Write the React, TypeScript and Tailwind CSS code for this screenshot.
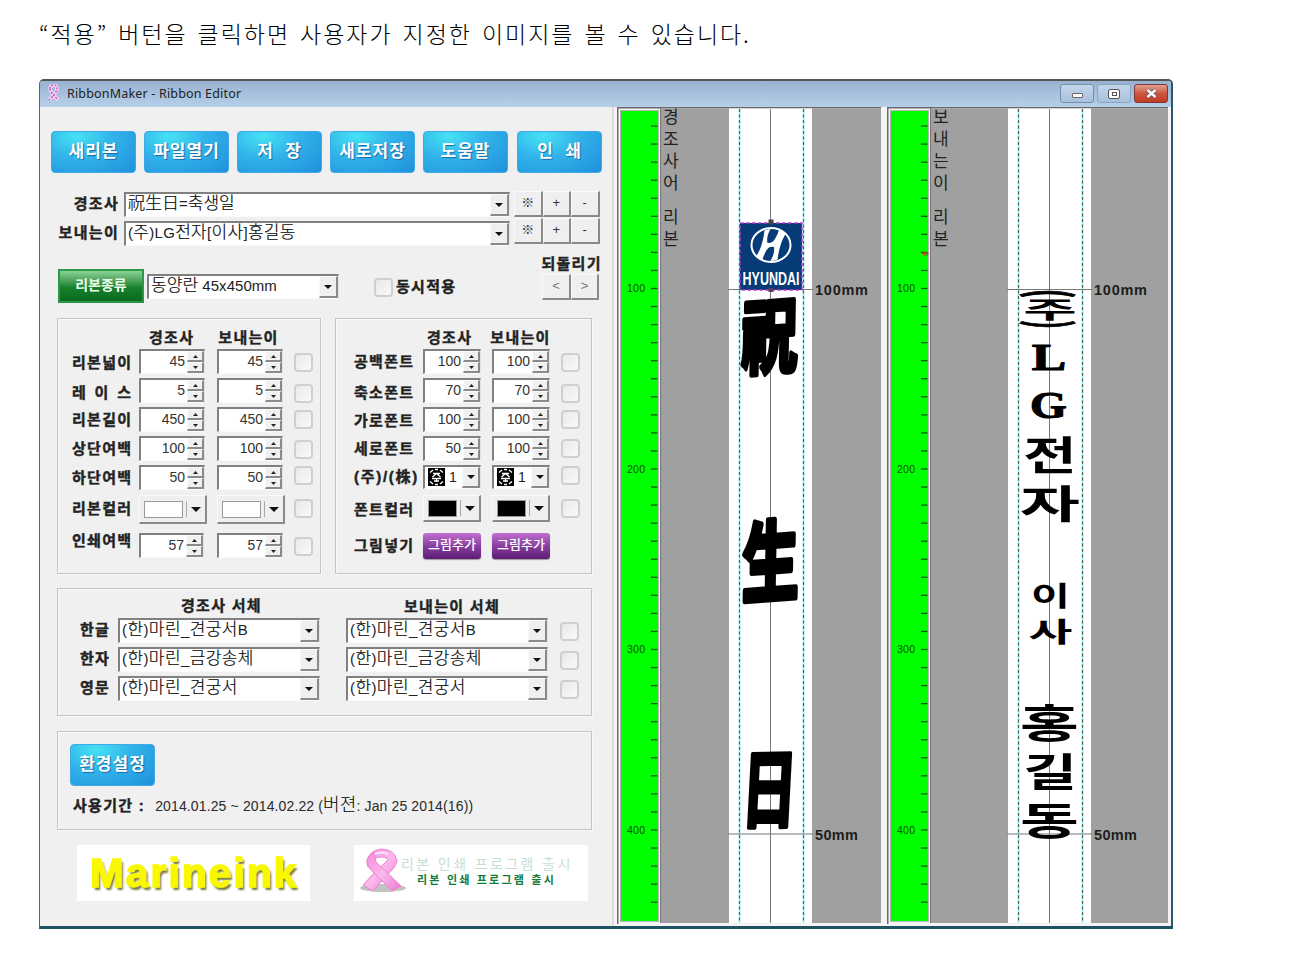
import React from "react";

const KR = "font-['Liberation_Sans','Noto_Sans_CJK_KR',sans-serif]";
const HAN = /([\u3131-\u318e\uac00-\ud7a3\u4e00-\u9fff]+)/;

/* Latin keeps the inherited size, Hangul and Hanja are set slightly larger. */
function Mixed({ text }: { text: string }) {
  return (
    <>
      {text.split(HAN).map((part, i) =>
        HAN.test(part) ? (
          <span key={i} className="text-[17px] leading-none font-light text-black [-webkit-text-stroke:0.2px_#222]">{part}</span>
        ) : (
          <span key={i}>{part}</span>
        ),
      )}
    </>
  );
}

function Label({ children, className = "" }: { children: React.ReactNode; className?: string }) {
  return (
    <div className={`h-5 shrink-0 whitespace-nowrap text-[15px] leading-5 font-bold tracking-[1.3px] text-[#222] [-webkit-text-stroke:0.4px_#222] ${className}`}>
      {children}
    </div>
  );
}

function BlueButton({ children, className = "" }: { children: React.ReactNode; className?: string }) {
  return (
    <button className={`h-[42px] w-[85px] shrink-0 rounded-[4px] border border-[#3fa9e6] bg-[radial-gradient(ellipse_at_30%_10%,#46e2f4_0%,#32b4ea_42%,#2090dc_100%)] pb-[2px] text-center text-[17px] leading-none font-bold tracking-[1px] whitespace-pre text-white [text-shadow:1px_1px_1px_#1769a8] ${className}`}>
      {children}
    </button>
  );
}

function Check({ className = "" }: { className?: string }) {
  return (
    <div className={`size-[19px] shrink-0 rounded-[4px] border-2 border-[#cfcfcf] bg-linear-to-br from-[#e9e9e9] to-[#f9f9f9] ${className}`} />
  );
}

function Down({ small = false }: { small?: boolean }) {
  return (
    <svg className={small ? "h-[4px] w-[8px]" : "h-[5px] w-[10px]"} viewBox="0 0 10 5">
      <path d="M0 0H10L5 5Z" fill="#111" />
    </svg>
  );
}

const SUNKEN = "border-t-2 border-l-2 border-r border-b border-t-[#808080] border-l-[#808080] border-r-[#e4e4e4] border-b-[#fafafa]";
const RAISED = "border-t border-l border-r-2 border-b-2 border-t-[#fafafa] border-l-[#fafafa] border-r-[#8a8a8a] border-b-[#8a8a8a]";

function Combo({ text, className = "", spacing = "tracking-[0.4px]" }: { text: string; className?: string; spacing?: string }) {
  return (
    <div className={`flex h-[25px] shrink-0 bg-white ${SUNKEN} ${className}`}>
      <div className={`min-w-0 flex-1 pl-[2px] text-[15px] leading-[20px] whitespace-nowrap text-[#222] ${spacing}`}>
        <Mixed text={text} />
      </div>
      <div className={`flex w-[19px] items-center justify-center bg-[#efefef] ${RAISED}`}>
        <Down small />
      </div>
    </div>
  );
}

function Spin({ value, className = "" }: { value: number; className?: string }) {
  return (
    <div className={`flex h-[25px] shrink-0 bg-white ${SUNKEN} ${className}`}>
      <div className="flex-1 pr-[2px] text-right text-[14px] leading-[21px] text-[#333]">{value}</div>
      <div className="flex w-[17px] flex-col">
        <div className={`flex flex-1 items-center justify-center bg-[#f0f0f0] ${RAISED}`}>
          <svg className="h-[3px] w-[5px]" viewBox="0 0 5 3"><path d="M0 3H5L2.5 0Z" fill="#222" /></svg>
        </div>
        <div className={`flex flex-1 items-center justify-center bg-[#f0f0f0] ${RAISED}`}>
          <svg className="h-[3px] w-[5px]" viewBox="0 0 5 3"><path d="M0 0H5L2.5 3Z" fill="#222" /></svg>
        </div>
      </div>
    </div>
  );
}

function ColorPick({ swatch, className = "" }: { swatch: string; className?: string }) {
  return (
    <div className={`flex shrink-0 items-center bg-[#efefef] pl-1 ${RAISED} ${className}`}>
      <div className={`h-[17px] flex-1 border border-[#9a9a9a] ${swatch}`} />
      <div className="mr-[4px] ml-[3px] h-4 w-px bg-[#a8a8a8]" />
      <Down />
      <div className="w-1" />
    </div>
  );
}

function CorpPick({ className = "" }: { className?: string }) {
  return (
    <div className={`flex h-6 shrink-0 bg-white ${SUNKEN} ${className}`}>
      <svg className="mt-px ml-[3px] h-[18px] w-[17px]" viewBox="0 0 17 18">
        <rect width="17" height="18" fill="#000" />
        <path d="M2 4.500L5 2M7 1.500H10M12 2L15 4.500M2 13.500L5 16M7 16.500H10M12 16L15 13.500M5 5.500H12M8.500 5.500L4.500 9M8.500 5.500L12.500 9M4 10.500H13M8.500 10.500V14M6 13H11" stroke="#fff" strokeWidth="1.300" fill="none" />
      </svg>
      <div className="flex-1 pl-[4px] text-[14px] leading-[20px] text-[#222]">1</div>
      <div className={`flex w-[18px] items-center justify-center bg-[#efefef] ${RAISED}`}>
        <Down small />
      </div>
    </div>
  );
}

function SmallButton({ children, className = "" }: { children: React.ReactNode; className?: string }) {
  return (
    <button className={`h-[26px] w-[28.500px] shrink-0 bg-[#efefef] pb-[2px] text-[13px] leading-none text-[#333] ${RAISED} ${className}`}>
      {children}
    </button>
  );
}

function PurpleButton({ className = "" }: { className?: string }) {
  return (
    <button className={`h-[26px] w-[58px] shrink-0 rounded-[3px] bg-linear-to-b from-[#c070d0] via-[#8a3fa0] to-[#5c1d75] pb-[3px] text-center text-[13px] leading-none font-medium whitespace-nowrap text-white shadow-[0_1px_1px_#999] ${className}`}>
      그림추가
    </button>
  );
}

const GROUP = "border border-[#c4c4c4] shadow-[inset_1px_1px_0_#f8f8f8,1px_1px_0_#f8f8f8]";

const LEFT_ROWS = [
  { label: "리본넓이", a: 45, b: 45, row: "h-[29px]", lab: "mt-[4px]", chk: "mt-[4px]" },
  { label: "레 이 스", a: 5, b: 5, row: "h-[29px]", lab: "mt-[5px]", chk: "mt-[6px]" },
  { label: "리본길이", a: 450, b: 450, row: "h-[29px]", lab: "mt-[3px]", chk: "mt-[3px]" },
  { label: "상단여백", a: 100, b: 100, row: "h-[29px]", lab: "mt-[3px]", chk: "mt-[4px]" },
  { label: "하단여백", a: 50, b: 50, row: "h-[30px]", lab: "mt-[3px]", chk: "mt-[1px]" },
];

const RIGHT_ROWS = [
  { label: "공백폰트", a: 100, b: 100, lab: "mt-[3px]", chk: "mt-[4px]" },
  { label: "축소폰트", a: 70, b: 70, lab: "mt-[5px]", chk: "mt-[6px]" },
  { label: "가로폰트", a: 100, b: 100, lab: "mt-[4px]", chk: "mt-[3px]" },
  { label: "세로폰트", a: 50, b: 100, lab: "mt-[3px]", chk: "mt-[3px]" },
];

const FONT_ROWS = [
  { label: "한글", font: "(한)마린_견궁서B" },
  { label: "한자", font: "(한)마린_금강송체" },
  { label: "영문", font: "(한)마린_견궁서" },
];

type GlyphSpec = {
  ch: string;
  x: number;
  y: number;
  w: number;
  h: number;
  inkW?: number;
  inkH?: number;
  mid?: number;
  serif?: boolean;
  skew?: number;
  tilt?: number;
  bold?: number;
  turn?: boolean;
};

/* A character stretched to fill the box x, y, w, h on the ribbon. */
function Glyph({ ch, x, y, w, h, inkW = 86, inkH = 92, mid = 38, serif, skew = 0, tilt = 0, bold = 0, turn }: GlyphSpec) {
  const t = `translate(${x + w / 2} ${y + h / 2}) rotate(${turn ? 90 : tilt}) skewX(${skew}) scale(${(turn ? h : w) / inkW} ${(turn ? w : h) / inkH})`;
  return (
    <text
      transform={t}
      y={mid}
      textAnchor="middle"
      fontSize="100"
      stroke="#000"
      strokeWidth={bold}
      strokeLinejoin="round"
      className={serif ? "font-['Liberation_Serif',serif] font-bold" : "font-['Noto_Sans_CJK_KR',sans-serif] font-bold"}
    >
      {ch}
    </text>
  );
}

function RibbonCanvas({
  width,
  ribbon,
  title,
  glyphs,
  children,
}: {
  width: number;
  ribbon: number;
  title: string;
  glyphs: GlyphSpec[];
  children?: React.ReactNode;
}) {
  const ticks = Array.from({ length: 44 }, (_, i) => (i + 1) * 10);
  const ty = (n: number) => 181.5 + (n - 100) * 1.805;
  return (
    <svg width={width} height="817" viewBox={`0 0 ${width} 817`} className={`block shrink-0 ${KR}`}>
      <rect width={width} height="817" fill="#f4f4f4" />
      <path d={`M0.750 817V0.750H${width}`} stroke="#6b6b6b" strokeWidth="1.500" fill="none" />
      <rect x="3.500" y="3.500" width="38" height="811" fill="#00ff00" stroke="#b5b5b5" />
      <rect x="43" y="1.500" width={width - 43} height="814.500" fill="#a0a0a0" />
      <path d="M43.500 1V816" stroke="#777" />
      {ticks.map((n) => (
        <path key={n} d={`M34 ${ty(n)}H40.500`} stroke="#065c06" strokeWidth="1.300" />
      ))}
      {[100, 200, 300, 400].map((n) => (
        <text key={n} x="10" y={ty(n) + 3.5} fontSize="10.500" textLength="18" fill="#075007">{n}</text>
      ))}
      {title.split("").map((ch, i) => (
        <text key={i} x="46" y={[16, 38, 60, 82, 99, 116, 138][i]} fontSize="17" fill="#222" className="font-['Noto_Sans_CJK_KR',sans-serif]">{ch}</text>
      ))}
      <rect x={ribbon} y="1.500" width="83" height="814.500" fill="#fff" />
      {[10.5, 74.5].map((dx) => (
        <g key={dx}>
          <path d={`M${ribbon + dx} 2V816`} stroke="#8ff3f3" strokeWidth="1.600" />
          <path d={`M${ribbon + dx} 2V816`} stroke="#4d6060" strokeWidth="1.200" strokeDasharray="3 2.500" />
        </g>
      ))}
      <path d={`M${ribbon + 41.5} 2V816M${ribbon - 1} 182.500H${ribbon + 84}M${ribbon - 1} 727H${ribbon + 84}`} stroke="#777" />
      <text x={ribbon + 86} y="188" fontSize="14.500" fontWeight="bold" textLength="53" fill="#1d1d1d">100mm</text>
      <text x={ribbon + 86} y="733" fontSize="14.500" fontWeight="bold" textLength="43" fill="#1d1d1d">50mm</text>
      {glyphs.map((g, i) => (
        <Glyph key={i} {...g} />
      ))}
      {children}
    </svg>
  );
}

const EVENT_GLYPHS: GlyphSpec[] = [
  { ch: "祝", x: 125, y: 188, w: 55, h: 80, inkW: 97, inkH: 97, bold: 6, skew: -5, tilt: -4 },
  { ch: "生", x: 126, y: 412, w: 55, h: 84, inkW: 97, inkH: 97, bold: 7, skew: -5, tilt: -4 },
  { ch: "日", x: 131, y: 642, w: 43, h: 79, inkW: 78, inkH: 93, bold: 5, skew: -4, tilt: -1 },
];

const SENDER_GLYPHS: GlyphSpec[] = [
  { ch: "(", x: 137, y: 184, w: 52, h: 5, inkW: 22, inkH: 98, mid: 36, bold: 3, turn: true },
  { ch: "주", x: 138, y: 192, w: 50, h: 21 },
  { ch: ")", x: 137, y: 215, w: 52, h: 5, inkW: 22, inkH: 98, mid: 36, bold: 3, turn: true },
  { ch: "L", x: 146, y: 238, w: 32, h: 25, inkW: 62, inkH: 67, mid: 33, serif: true, bold: 3 },
  { ch: "G", x: 144, y: 286, w: 35, h: 26, inkW: 74, inkH: 70, mid: 33, serif: true, bold: 3 },
  { ch: "전", x: 138, y: 329, w: 50, h: 37 },
  { ch: "자", x: 135, y: 378, w: 56, h: 36 },
  { ch: "이", x: 147, y: 476, w: 33, h: 25, inkW: 78 },
  { ch: "사", x: 143, y: 512, w: 41, h: 25 },
  { ch: "홍", x: 135, y: 597, w: 55, h: 37 },
  { ch: "길", x: 140, y: 646, w: 46, h: 36, inkW: 78 },
  { ch: "동", x: 135, y: 695, w: 55, h: 36 },
];

function Emblem() {
  return (
    <g>
      <rect x="123" y="116" width="62" height="67" fill="#063b78" />
      <rect x="123" y="116" width="62" height="67" fill="none" stroke="#b43cc8" strokeWidth="1.500" strokeDasharray="3.500 2.500" />
      <ellipse cx="154" cy="138" rx="19.500" ry="17" fill="none" stroke="#fff" strokeWidth="2" />
      <path
        d="M147.500 123.500Q150.500 122 153.500 122Q149 130 150.500 136Q156 136.500 158.500 131Q161 126.500 162 123Q165.500 124 168.500 127Q162.500 137 160.500 152.500Q157 154 153.500 154Q158 146 157 140Q151.500 138.500 148.500 145Q146.500 149 145.500 152.500Q142 151.500 139.500 149Q146 138 147.500 123.500Z"
        fill="#fff"
      />
      <text x="125.500" y="178" fontSize="19" fontWeight="bold" textLength="57" lengthAdjust="spacingAndGlyphs" fill="#fff">HYUNDAI</text>
      <rect x="151.500" y="112.500" width="5" height="5" fill="#444" />
      <rect x="151.500" y="181" width="5" height="4" fill="#544058" />
    </g>
  );
}

function Awareness({ className }: { className: string }) {
  return (
    <svg viewBox="0 0 48 46" className={className}>
      <defs>
        <linearGradient id="pink" x1="0" y1="0" x2="1" y2="1">
          <stop offset="0" stopColor="#f78be0" />
          <stop offset="0.500" stopColor="#fbb9ec" />
          <stop offset="1" stopColor="#ee79cf" />
        </linearGradient>
      </defs>
      <ellipse cx="24" cy="40" rx="23" ry="4" fill="#c2c2c2" />
      <path d="M8 14Q9 3 22 1Q35 1 38 12Q38 18 29 26L14 43L4 37Q16 23 28 13Q31 9 22 9Q14 9 17 13L9 19Z" fill="url(#pink)" stroke="#e983cf" />
      <path d="M8 12Q10 6 16 5Q14 12 20 17L42 38L33 43L12 22Q7 17 8 12Z" fill="url(#pink)" stroke="#e983cf" />
      <path d="M16 6Q22 3 29 6" stroke="#fde4f8" strokeWidth="2" fill="none" />
    </svg>
  );
}

export default function App() {
  return (
    <div className={`flex h-[967px] w-[1306px] flex-col overflow-hidden bg-white pl-[39px] ${KR}`}>
      <h1 className="mt-[15px] h-9 font-['Noto_Sans_CJK_KR',sans-serif] text-[23px] leading-9 font-light tracking-[1.950px] whitespace-nowrap text-black [word-spacing:3px]">
        “적용” 버턴을 클릭하면 사용자가 지정한 이미지를 볼 수 있습니다.
      </h1>

      <div className="mt-[28px] flex h-[850px] w-[1134px] flex-col rounded-t-[5px] border-t-2 border-r-2 border-b-[3px] border-l border-t-[#555] border-r-[#2b566c] border-b-[#1d5264] border-l-[#5f6468] bg-[#f0f0f0]">
        <div className="flex h-[26px] shrink-0 rounded-t-[3px] bg-linear-to-b from-[#97b2d1] to-[#b7cfe9] pl-[6px]">
          <svg className="mt-[3px] h-[18px] w-[15px]" viewBox="0 0 15 18">
            <path d="M4 5Q4 1 7.500 1T11 5Q11 8 3 16M4 5Q4 8 12 16" stroke="#f7d9f4" strokeWidth="3.500" fill="none" />
            <path d="M4 5Q4 1 7.500 1T11 5Q11 8 3 16M4 5Q4 8 12 16" stroke="#d23fd0" strokeWidth="1.400" strokeDasharray="2 1.500" fill="none" />
          </svg>
          <div className="ml-[6px] flex-1 font-['Noto_Sans',sans-serif] text-[12.500px] leading-[25px] tracking-[0.180px] whitespace-nowrap text-[#222]">RibbonMaker - Ribbon Editor</div>
          <div className="mt-[3px] mr-[3px] flex h-[19px] gap-[3px]">
            <div className="flex w-[34px] items-end justify-center rounded-[3px] border border-[#758fab] bg-linear-to-b from-[#c3d5ea] to-[#a9c1dc] pb-[4px]">
              <div className="h-[5px] w-[11px] rounded-[1px] border border-[#666] bg-white" />
            </div>
            <div className="flex w-[34px] items-center justify-center rounded-[3px] border border-[#8ba6c4] bg-linear-to-b from-[#c3d5ea] to-[#a9c1dc]">
              <div className="flex h-[10px] w-[12px] items-center justify-center rounded-[2px] border border-[#555] bg-white">
                <div className="h-[4px] w-[5px] border border-[#555]" />
              </div>
            </div>
            <div className="flex w-[34px] items-center justify-center rounded-[3px] border border-[#7d3a35] bg-linear-to-b from-[#e0a091] via-[#cf5540] to-[#c03b24]">
              <svg className="h-[9px] w-[11px]" viewBox="0 0 11 9">
                <path d="M1.500 1L9.500 8M9.500 1L1.500 8" stroke="#555" strokeWidth="4" />
                <path d="M1.500 1L9.500 8M9.500 1L1.500 8" stroke="#fff" strokeWidth="2.500" />
              </svg>
            </div>
          </div>
        </div>

        <div className="flex min-h-0 flex-1">
          <div className="flex w-[574px] shrink-0 flex-col border-r-2 border-[#dcdcd6]">
            <div className="mt-6 ml-[11px] flex h-[42px] gap-2">
              <BlueButton>새리본</BlueButton>
              <BlueButton>파일열기</BlueButton>
              <BlueButton>저  장</BlueButton>
              <BlueButton>새로저장</BlueButton>
              <BlueButton>도움말</BlueButton>
              <BlueButton className="ml-[1px]">인  쇄</BlueButton>
            </div>

            <div className="mt-[18px] flex h-[29px] items-start">
              <Label className="mt-[3px] w-[84px] pr-[5px] text-right">경조사</Label>
              <Combo className="mt-px w-[386px]" text="祝生日=축생일" spacing="tracking-[0px]" />
              <SmallButton className="ml-[4px]">※</SmallButton>
              <SmallButton>+</SmallButton>
              <SmallButton>-</SmallButton>
            </div>
            <div className="flex h-[29px] items-start">
              <Label className="mt-[3px] w-[84px] pr-[5px] text-right">보내는이</Label>
              <Combo className="mt-px w-[386px]" text="(주)LG전자[이사]홍길동" spacing="tracking-[0.3px]" />
              <SmallButton className="-mt-[2px] ml-[4px]">※</SmallButton>
              <SmallButton className="-mt-[2px]">+</SmallButton>
              <SmallButton className="-mt-[2px]">-</SmallButton>
            </div>

            <div className="mt-[4px] flex h-[50px] items-start">
              <button className="mt-4 ml-[18px] h-[34px] w-[86px] border-2 border-[#2c9847] bg-linear-to-b from-[#8bd398] via-[#16812c] via-55% to-[#0b6a1f] pb-[2px] text-center text-[14px] leading-none font-bold text-[#e9ffe9]">
                리본종류
              </button>
              <Combo className="mt-[21px] ml-[3px] w-[192px]" text="동양란 45x450mm" spacing="tracking-[0.050px]" />
              <Check className="mt-[25px] ml-[35px]" />
              <Label className="mt-[24px] ml-[3px]">동시적용</Label>
              <div className="ml-[85px] flex flex-col">
                <Label className="mt-px">되돌리기</Label>
                <div className="ml-px flex">
                  <SmallButton className="text-[#777]">&lt;</SmallButton>
                  <SmallButton className="text-[#777]">&gt;</SmallButton>
                </div>
              </div>
            </div>

            <div className="mt-[15px] ml-[17px] flex h-[256px] gap-[14px]">
              <div className={`flex w-[264px] flex-col ${GROUP}`}>
                <div className="mt-[9px] flex h-[21px]">
                  <Label className="ml-[91px]">경조사</Label>
                  <Label className="ml-[24px]">보내는이</Label>
                </div>
                {LEFT_ROWS.map((r) => (
                  <div key={r.label} className={`flex items-start ${r.row}`}>
                    <Label className={`w-[67px] pl-[14px] [word-spacing:2px] ${r.lab}`}>{r.label}</Label>
                    <Spin className="ml-[14px] w-[66px]" value={r.a} />
                    <Spin className="ml-[12px] w-[66px]" value={r.b} />
                    <Check className={`ml-[11px] ${r.chk}`} />
                  </div>
                ))}
                <div className="flex h-[38px] items-start">
                  <Label className="mt-[4px] w-[67px] pl-[14px]">리본컬러</Label>
                  <ColorPick className="ml-[14px] h-[29px] w-[68px]" swatch="bg-white" />
                  <ColorPick className="ml-[10px] h-[29px] w-[68px]" swatch="bg-white" />
                  <Check className="mt-[4px] ml-[9px]" />
                </div>
                <div className="flex items-start">
                  <Label className="-mt-[2px] w-[67px] pl-[14px]">인쇄여백</Label>
                  <Spin className="ml-[14px] w-[65px]" value={57} />
                  <Spin className="ml-[13px] w-[66px]" value={57} />
                  <Check className="mt-[4px] ml-[11px]" />
                </div>
              </div>

              <div className={`flex w-[257px] flex-col ${GROUP}`}>
                <div className="mt-[9px] flex h-[21px]">
                  <Label className="ml-[91px]">경조사</Label>
                  <Label className="ml-[18px]">보내는이</Label>
                </div>
                {RIGHT_ROWS.map((r) => (
                  <div key={r.label} className="flex h-[29px] items-start">
                    <Label className={`w-[73px] pl-[18px] ${r.lab}`}>{r.label}</Label>
                    <Spin className="ml-[14px] w-[58px]" value={r.a} />
                    <Spin className="ml-[11px] w-[58px]" value={r.b} />
                    <Check className={`ml-[11px] ${r.chk}`} />
                  </div>
                ))}
                <div className="flex h-[30px] items-start">
                  <Label className="mt-[2px] w-[73px] pl-[18px] tracking-[1.7px]">(주)/(株)</Label>
                  <CorpPick className="ml-[14px] w-[58px]" />
                  <CorpPick className="ml-[11px] w-[58px]" />
                  <Check className="mt-[1px] ml-[11px]" />
                </div>
                <div className="flex h-[38px] items-start">
                  <Label className="mt-[5px] w-[73px] pl-[18px]">폰트컬러</Label>
                  <ColorPick className="ml-[14px] h-[27px] w-[58px]" swatch="bg-black" />
                  <ColorPick className="ml-[11px] h-[27px] w-[58px]" swatch="bg-black" />
                  <Check className="mt-[4px] ml-[11px]" />
                </div>
                <div className="flex items-start">
                  <Label className="mt-[3px] w-[73px] pl-[18px]">그림넣기</Label>
                  <PurpleButton className="ml-[14px]" />
                  <PurpleButton className="ml-[11px]" />
                </div>
              </div>
            </div>

            <div className={`mt-[14px] ml-[17px] flex h-[128px] w-[535px] flex-col ${GROUP}`}>
              <div className="mt-[7px] flex h-[22px]">
                <Label className="ml-[123px]">경조사 서체</Label>
                <Label className="mt-px ml-[142px]">보내는이 서체</Label>
              </div>
              {FONT_ROWS.map((r) => (
                <div key={r.label} className="flex h-[29px] items-start">
                  <Label className="mt-[2px] ml-[22px] w-[38px]">{r.label}</Label>
                  <Combo className="w-[202px]" text={r.font} />
                  <Combo className="ml-[26px] w-[202px]" text={r.font} />
                  <Check className="mt-[4px] ml-[12px]" />
                </div>
              ))}
            </div>

            <div className={`mt-[15px] ml-[17px] flex h-[99px] w-[535px] flex-col ${GROUP}`}>
              <BlueButton className="mt-[12px] ml-[12px]">환경설정</BlueButton>
              <div className="mt-[10px] ml-[15px] flex h-5 items-center">
                <Label>사용기간 :</Label>
                <div className="ml-[10px] text-[14px] leading-5 tracking-[0.130px] whitespace-nowrap text-[#2a2a2a]">
                  2014.01.25 ~ 2014.02.22 (<span className="text-[18px] leading-none font-light text-black">버젼</span>: Jan 25 2014(16))
                </div>
              </div>
            </div>

            <div className="mt-[15px] ml-[37px] flex h-[56px] gap-[44px]">
              <div className="w-[233px] bg-white pl-[2px] text-center text-[40px] leading-[57px] font-bold tracking-[2.4px] text-[#f8f800] [-webkit-text-stroke:1.5px_#f8f800] [text-shadow:2px_3px_2px_#77773a]">
                Marineink
              </div>
              <div className="flex w-[234px] bg-white">
                <Awareness className="mt-[3px] ml-[5px] h-[46px] w-[48px] shrink-0" />
                <div className="-ml-[6px] flex flex-col whitespace-nowrap">
                  <div className="mt-[10px] h-[18px] text-[14px] leading-[18px] tracking-[2.4px] text-[#c5dfd4]">리본 인쇄 프로그램 출시</div>
                  <div className="ml-[16px] h-[14px] text-[11px] leading-[14px] font-bold tracking-[2.2px] text-[#167a35]">리본 인쇄 프로그램 출시</div>
                </div>
              </div>
            </div>
          </div>

          <div className="flex flex-1 bg-[#f4f4f4] pl-[3px]">
            <RibbonCanvas width={264} ribbon={112} title="경조사어 리본" glyphs={EVENT_GLYPHS}>
              <Emblem />
            </RibbonCanvas>
            <div className="w-[6px]" />
            <RibbonCanvas width={281} ribbon={121} title="보내는이 리본" glyphs={SENDER_GLYPHS}>
              <path d="M35 146.500H41.500M38 145V149M40 148H41" stroke="#c8401c" strokeWidth="1.600" />
            </RibbonCanvas>
          </div>
        </div>
      </div>
    </div>
  );
}
